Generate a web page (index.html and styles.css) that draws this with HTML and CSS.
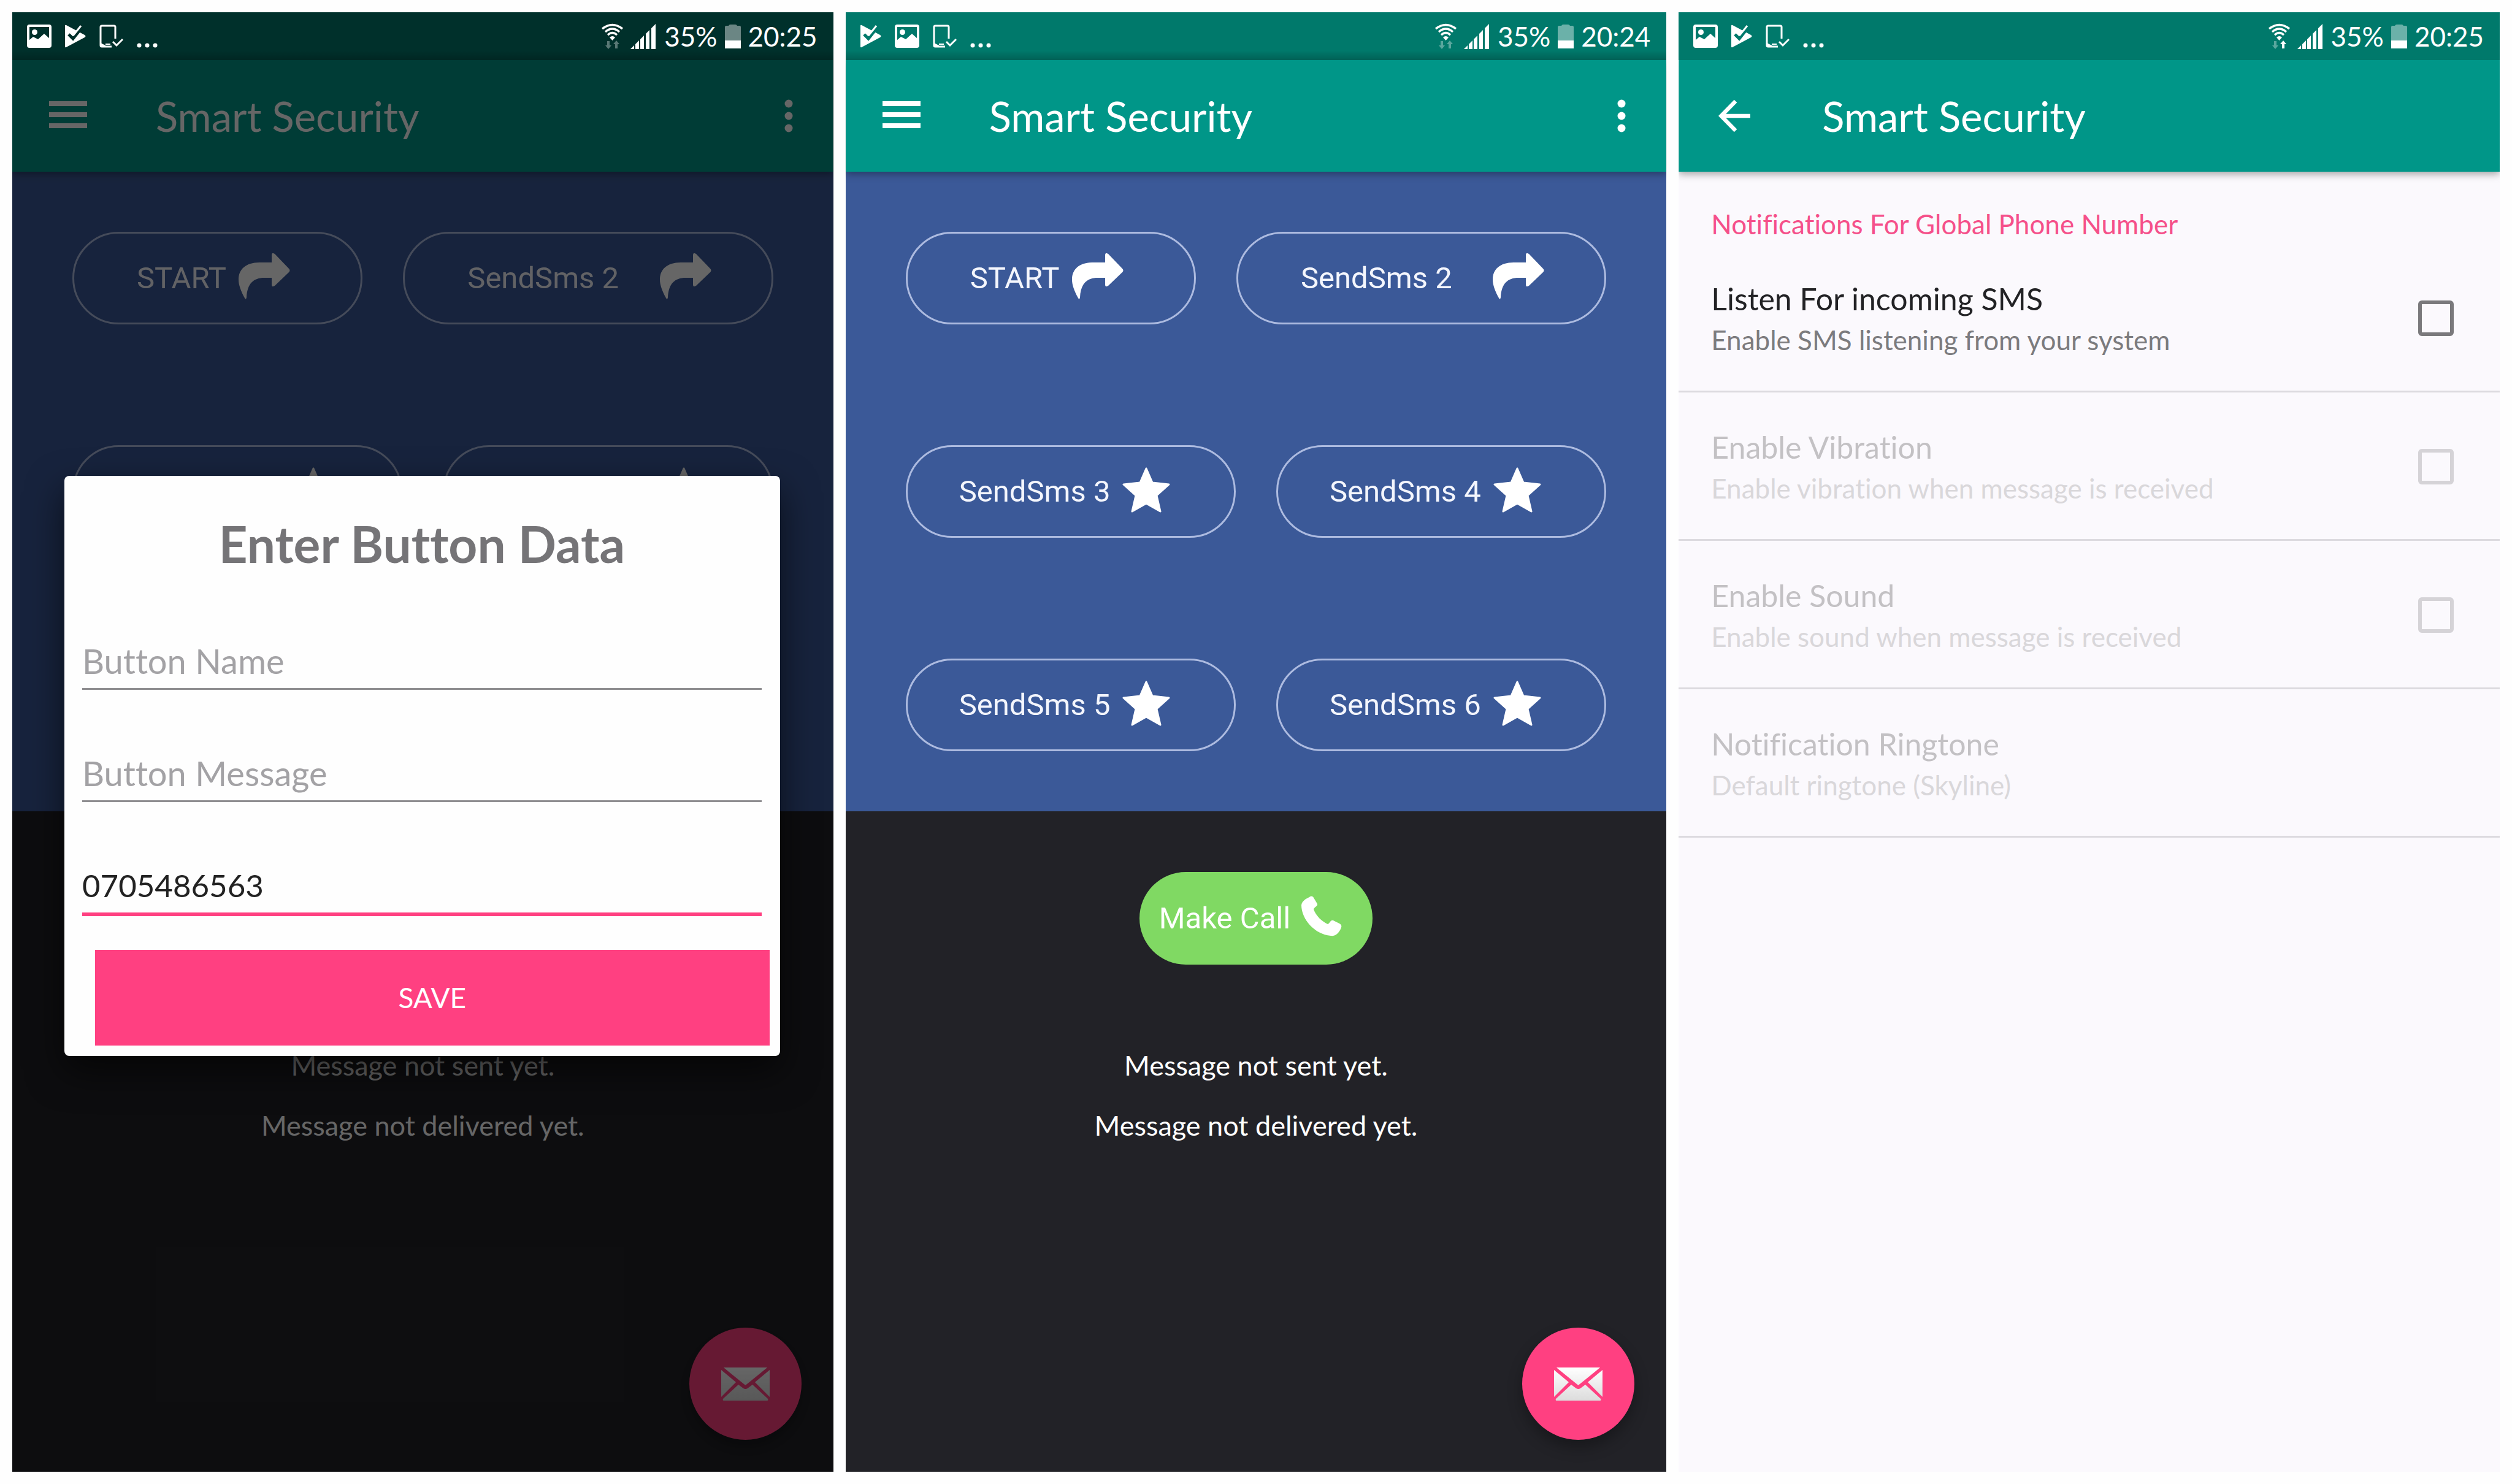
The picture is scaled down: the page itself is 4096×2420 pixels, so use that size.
FILE: index.html
```html
<!DOCTYPE html>
<html lang="en">
<head>
<meta charset="utf-8">
<title>Smart Security</title>
<meta name="viewport" content="width=device-width, initial-scale=1">
<link rel="stylesheet" href="styles.css">
</head>
<body>
<svg class="sprite" aria-hidden="true">
  <defs>
    <linearGradient id="paper" x1="0" y1="0" x2="0" y2="1">
      <stop offset="0" stop-color="#ffffff"/>
      <stop offset="1" stop-color="#dcdcdc"/>
    </linearGradient>
    <symbol id="i-image" viewBox="0 0 40 38">
      <rect x="2" y="2" width="36" height="34" rx="2" fill="none" stroke="currentColor" stroke-width="4"/>
      <circle cx="12.500" cy="12.500" r="4.500" fill="currentColor"/>
      <path fill="currentColor" d="M3 26 10 20 18 24 28 15 37 23V36H3Z"/>
    </symbol>
    <symbol id="i-play" viewBox="0 0 34 38">
      <path fill="currentColor" d="M0 2Q0 0 2 1L32 17Q35 19 32 21L2 37Q0 38 0 36Z"/>
      <path class="knockout" d="M6 16 13 23 29 3" fill="none" stroke-width="5"/>
      <path d="M9 13 14 17 26 2" fill="none" stroke="currentColor" stroke-width="3"/>
    </symbol>
    <symbol id="i-device" viewBox="0 0 39 38">
      <path fill="none" stroke="currentColor" stroke-width="3" d="M26 23V4Q26 2 24 2H4Q2 2 2 4V34Q2 36 4 36H20"/>
      <path fill="currentColor" d="M2 30 10 34V37H3Z"/>
      <path fill="none" stroke="currentColor" stroke-width="2" d="M10 32H18"/>
      <path fill="none" stroke="currentColor" stroke-width="3" d="M22 28 28 34 38 24"/>
    </symbol>
    <symbol id="i-more" viewBox="0 0 34 38">
      <circle cx="4" cy="34" r="3.500" fill="currentColor"/><circle cx="17" cy="34" r="3.500" fill="currentColor"/><circle cx="30" cy="34" r="3.500" fill="currentColor"/>
    </symbol>
    <symbol id="i-wifi" viewBox="0 0 35 42">
      <g fill="none" stroke="currentColor" stroke-width="3.500">
        <path d="M1 9Q17.500-4 34 9"/><path d="M6 14Q17.500 4 29 14"/><path d="M10 19Q17.500 12 25 19"/>
      </g>
      <path fill="currentColor" d="M17.500 28 13 23Q17.500 19 22 23Z"/>
      <path class="wifi-down" fill="currentColor" d="M9 29H13V36H16L11 42 6 36H9Z"/>
      <path class="wifi-up" fill="currentColor" d="M22 41H26V34H29L24 28 19 34H22Z"/>
    </symbol>
    <symbol id="i-signal" viewBox="0 0 41 41">
      <path fill="currentColor" d="M0 41 6 35V41ZM8 33 14 27V41H8ZM16 25 22 19V41H16ZM25 16 31 10V41H25ZM34 7 41 0V41H34Z"/>
    </symbol>
    <symbol id="i-battery" viewBox="0 0 26 39">
      <path fill="currentColor" opacity=".42" d="M0 4Q0 2 2 2H6Q7 0 9 0H17Q19 0 20 2H24Q26 2 26 4V26H0Z"/>
      <path fill="currentColor" d="M0 26H26V39H0Z"/>
    </symbol>
    <symbol id="i-menu" viewBox="0 0 62 44">
      <path fill="currentColor" d="M0 0H62V8H0ZM0 18H62V26H0ZM0 36H62V44H0Z"/>
    </symbol>
    <symbol id="i-dots" viewBox="0 0 14 54">
      <circle cx="7" cy="7" r="6.500" fill="currentColor"/><circle cx="7" cy="27" r="6.500" fill="currentColor"/><circle cx="7" cy="47" r="6.500" fill="currentColor"/>
    </symbol>
    <symbol id="i-back" viewBox="0 0 52 52">
      <path fill="none" stroke="currentColor" stroke-width="6.500" d="M28 2 4.500 26 28 50M5 26H52"/>
    </symbol>
    <symbol id="i-forward" viewBox="0 0 84 75">
      <path fill="currentColor" d="M54 3Q54-2 59 1L82 25Q85 28 82 31L59 53Q54 56 54 51V40H42C24 40 14 50 13 72Q12 77 10 73C4 62 0 52 0 43C0 26 12 15 34 15H54Z"/>
    </symbol>
    <symbol id="i-star" viewBox="0 0 78 74">
      <path fill="currentColor" stroke="currentColor" stroke-width="3" stroke-linejoin="round" d="M39 2 49 25 76 28 56 46 62 72 39 59 16 72 22 46 2 28 29 25Z"/>
    </symbol>
    <symbol id="i-phone" viewBox="0 0 66 66">
      <path fill="currentColor" d="M13 2C16 0 18 0 20 3L26 13C27 17 21 18 20 22C24 33 34 42 43 46C46 45 48 38 52 40L62 45C66 47 66 50 64 54C60 62 55 66 48 65C22 63 0 38 0 15C1 9 6 5 13 2Z"/>
    </symbol>
    <symbol id="i-mail" viewBox="0 0 79 54">
      <path fill="url(#paper)" d="M4 0H75Q73 2 39.500 29Q6 2 4 0ZM0 4 24 24 0 48ZM79 4 55 24 79 48ZM4 54Q2 54 3 51L28 28 36 34Q39.500 36 43 34L51 28 76 51Q77 54 75 54Z"/>
    </symbol>
  </defs>
</svg>

<main class="gallery">

  <section class="phone phone--dimmed">
    <div class="status">
      <svg class="status__image"><use href="#i-image"/></svg>
      <svg class="status__play"><use href="#i-play"/></svg>
      <svg class="status__device"><use href="#i-device"/></svg>
      <svg class="status__more"><use href="#i-more"/></svg>
      <svg class="status__wifi"><use href="#i-wifi"/></svg>
      <svg class="status__signal"><use href="#i-signal"/></svg>
      <span class="status__level">35%</span>
      <svg class="status__battery"><use href="#i-battery"/></svg>
      <span class="status__time">20:25</span>
    </div>
    <div class="screen">
      <header class="appbar">
        <button class="icon-button" aria-label="Menu"><svg class="icon-menu"><use href="#i-menu"/></svg></button>
        <h1 class="appbar__title">Smart Security</h1>
        <button class="icon-button" aria-label="More options"><svg class="icon-dots"><use href="#i-dots"/></svg></button>
      </header>
      <div class="actions">
        <div class="actions__row actions__row--first">
          <button class="pill pill--arrow">START<svg class="icon-forward"><use href="#i-forward"/></svg></button>
          <button class="pill pill--arrow pill--spread">SendSms 2<svg class="icon-forward"><use href="#i-forward"/></svg></button>
        </div>
        <div class="actions__row">
          <button class="pill">SendSms 3<svg class="icon-star"><use href="#i-star"/></svg></button>
          <button class="pill">SendSms 4<svg class="icon-star"><use href="#i-star"/></svg></button>
        </div>
        <div class="actions__row">
          <button class="pill">SendSms 5<svg class="icon-star"><use href="#i-star"/></svg></button>
          <button class="pill">SendSms 6<svg class="icon-star"><use href="#i-star"/></svg></button>
        </div>
      </div>
      <div class="calls">
        <button class="call">Make Call<svg class="icon-phone"><use href="#i-phone"/></svg></button>
        <p class="report">Message not sent yet.</p>
        <p class="report">Message not delivered yet.</p>
      </div>
      <button class="fab" aria-label="Compose message"><svg class="icon-mail"><use href="#i-mail"/></svg></button>
      <div class="scrim">
        <form class="dialog">
          <h2 class="dialog__title">Enter Button Data</h2>
          <input class="field" type="text" placeholder="Button Name" aria-label="Button Name">
          <input class="field" type="text" placeholder="Button Message" aria-label="Button Message">
          <input class="field field--active" type="tel" value="0705486563" aria-label="Phone number">
          <button class="save" type="button">SAVE</button>
        </form>
      </div>
    </div>
  </section>

  <section class="phone">
    <div class="status status--shaded">
      <svg class="status__play"><use href="#i-play"/></svg>
      <svg class="status__image"><use href="#i-image"/></svg>
      <svg class="status__device"><use href="#i-device"/></svg>
      <svg class="status__more"><use href="#i-more"/></svg>
      <svg class="status__wifi"><use href="#i-wifi"/></svg>
      <svg class="status__signal"><use href="#i-signal"/></svg>
      <span class="status__level">35%</span>
      <svg class="status__battery"><use href="#i-battery"/></svg>
      <span class="status__time">20:24</span>
    </div>
    <div class="screen">
      <header class="appbar">
        <button class="icon-button" aria-label="Menu"><svg class="icon-menu"><use href="#i-menu"/></svg></button>
        <h1 class="appbar__title">Smart Security</h1>
        <button class="icon-button" aria-label="More options"><svg class="icon-dots"><use href="#i-dots"/></svg></button>
      </header>
      <div class="actions">
        <div class="actions__row actions__row--first">
          <button class="pill pill--arrow">START<svg class="icon-forward"><use href="#i-forward"/></svg></button>
          <button class="pill pill--arrow pill--spread">SendSms 2<svg class="icon-forward"><use href="#i-forward"/></svg></button>
        </div>
        <div class="actions__row">
          <button class="pill">SendSms 3<svg class="icon-star"><use href="#i-star"/></svg></button>
          <button class="pill">SendSms 4<svg class="icon-star"><use href="#i-star"/></svg></button>
        </div>
        <div class="actions__row">
          <button class="pill">SendSms 5<svg class="icon-star"><use href="#i-star"/></svg></button>
          <button class="pill">SendSms 6<svg class="icon-star"><use href="#i-star"/></svg></button>
        </div>
      </div>
      <div class="calls">
        <button class="call">Make Call<svg class="icon-phone"><use href="#i-phone"/></svg></button>
        <p class="report">Message not sent yet.</p>
        <p class="report">Message not delivered yet.</p>
      </div>
      <button class="fab" aria-label="Compose message"><svg class="icon-mail"><use href="#i-mail"/></svg></button>
    </div>
  </section>

  <section class="phone phone--uploading">
    <div class="status">
      <svg class="status__image"><use href="#i-image"/></svg>
      <svg class="status__play"><use href="#i-play"/></svg>
      <svg class="status__device"><use href="#i-device"/></svg>
      <svg class="status__more"><use href="#i-more"/></svg>
      <svg class="status__wifi"><use href="#i-wifi"/></svg>
      <svg class="status__signal"><use href="#i-signal"/></svg>
      <span class="status__level">35%</span>
      <svg class="status__battery"><use href="#i-battery"/></svg>
      <span class="status__time">20:25</span>
    </div>
    <div class="screen screen--light">
      <header class="appbar">
        <button class="icon-button icon-button--back" aria-label="Back"><svg class="icon-back"><use href="#i-back"/></svg></button>
        <h1 class="appbar__title">Smart Security</h1>
      </header>
      <div class="settings">
        <h2 class="settings__category">Notifications For Global Phone Number</h2>
        <label class="setting">
          <span class="setting__text">
            <span class="setting__title">Listen For incoming SMS</span>
            <span class="setting__summary">Enable SMS listening from your system</span>
          </span>
          <input class="setting__box" type="checkbox">
        </label>
        <label class="setting setting--off">
          <span class="setting__text">
            <span class="setting__title">Enable Vibration</span>
            <span class="setting__summary">Enable vibration when message is received</span>
          </span>
          <input class="setting__box" type="checkbox" disabled>
        </label>
        <label class="setting setting--off">
          <span class="setting__text">
            <span class="setting__title">Enable Sound</span>
            <span class="setting__summary">Enable sound when message is received</span>
          </span>
          <input class="setting__box" type="checkbox" disabled>
        </label>
        <div class="setting setting--off">
          <span class="setting__text">
            <span class="setting__title">Notification Ringtone</span>
            <span class="setting__summary">Default ringtone (Skyline)</span>
          </span>
        </div>
      </div>
    </div>
  </section>

</main>
</body>
</html>
```
FILE: styles.css
```css
:root {
  --teal: #009688;
  --teal-dark: #00796b;
  --pink: #ff4081;
  --blue: #3b5998;
  --night: #222227;
}

* { box-sizing: border-box; }

body {
  margin: 0;
  background: #fefefe;
  font-family: Lato, "Noto Sans", sans-serif;
  font-variant-ligatures: no-common-ligatures;
}

h1, h2, p { margin: 0; font-weight: 400; }

button {
  margin: 0;
  padding: 0;
  border: 0;
  background: none;
  color: inherit;
  font: inherit;
  cursor: pointer;
}

svg { display: block; flex: none; }
.sprite { position: absolute; width: 0; height: 0; }

.gallery {
  display: grid;
  grid-template-columns: repeat(3, 1fr);
  gap: 20px;
  min-height: 100vh;
  padding: 20px;
}

.phone {
  --bar: var(--teal-dark);
  --wifi-up: .35;
  display: flex;
  flex-direction: column;
  color: #fff;
}
.phone--dimmed { --bar: #00302b; }
.phone--uploading { --wifi-up: 1; }

/* Status bar */
.status {
  display: flex;
  align-items: center;
  height: 78px;
  padding: 0 26px 0 24px;
  background: var(--bar);
  font-size: 44px;
  line-height: 54px;
}
.phone--dimmed .status,
.status--shaded { background: linear-gradient(transparent 80%, rgba(0, 0, 0, .2)) var(--bar); }
.knockout { stroke: var(--bar); }
.status__image { width: 40px; height: 38px; margin-right: 22px; }
.status__play { width: 34px; height: 38px; margin-right: 22px; }
.status__device { width: 39px; height: 38px; margin-right: 22px; }
.status__more { width: 34px; height: 38px; margin-right: auto; }
.status__wifi { width: 35px; height: 42px; margin-right: 12px; }
.status__signal { width: 41px; height: 41px; margin-right: 14px; }
.status__battery { width: 26px; height: 39px; margin: 0 12px; }
.wifi-down { opacity: .35; }
.wifi-up { opacity: var(--wifi-up); }

/* Screen */
.screen {
  position: relative;
  flex: 1;
  display: flex;
  flex-direction: column;
  background: var(--night);
}
.screen--light { background: #fbf9fd; }

.appbar {
  z-index: 1;
  display: flex;
  align-items: center;
  height: 182px;
  padding: 0 66px 0 60px;
  background: var(--teal);
  box-shadow: 0 4px 12px rgba(0, 0, 0, .35);
  clip-path: inset(0 0 -20px);
}
.appbar__title {
  flex: 1;
  font-size: 67px;
  line-height: 80px;
}
.icon-button { display: flex; }
.icon-button:first-child { width: 174px; }
.icon-button--back { padding-left: 5px; }
.icon-menu { width: 62px; height: 44px; margin-bottom: 4px; }
.icon-dots { width: 14px; height: 54px; }
.icon-back { width: 52px; height: 52px; }

.actions {
  display: grid;
  gap: 197px;
  padding: 98px;
  background: var(--blue);
}
.actions__row {
  display: grid;
  grid-template-columns: 1fr 1fr;
  gap: 66px;
}
.actions__row--first { grid-template-columns: 473fr 603fr; }

.pill {
  display: flex;
  align-items: center;
  gap: 20px;
  height: 151px;
  padding: 0 84px;
  border: 3px solid rgba(222, 230, 255, .7);
  border-radius: 76px;
  font-family: Roboto, "Noto Sans", sans-serif;
  font-size: 49px;
  line-height: 60px;
  color: #f4f6fd;
}
.pill--arrow { padding: 0 98px 0 102px; }
.pill--spread { justify-content: space-between; }
.pill svg { margin-bottom: 6px; color: #fff; }
.icon-forward { width: 84px; height: 75px; }
.icon-star { width: 78px; height: 74px; }

.calls {
  display: flex;
  flex-direction: column;
  align-items: center;
  padding-top: 99px;
}
.call {
  display: flex;
  align-items: center;
  gap: 18px;
  height: 151px;
  margin-bottom: 137px;
  padding: 0 50px 0 32px;
  border-radius: 76px;
  background: #80d963;
  font-family: Roboto, "Noto Sans", sans-serif;
  font-size: 49px;
  line-height: 60px;
}
.icon-phone { width: 66px; height: 66px; margin-bottom: 8px; }

.report {
  margin-bottom: 44px;
  font-size: 45px;
  line-height: 54px;
}

.fab {
  position: absolute;
  right: 52px;
  bottom: 52px;
  display: flex;
  align-items: center;
  justify-content: center;
  width: 183px;
  height: 183px;
  border-radius: 50%;
  background: var(--pink);
  box-shadow: 0 12px 24px rgba(0, 0, 0, .3);
}
.icon-mail { width: 79px; height: 54px; }

/* Dialog */
.scrim {
  position: absolute;
  inset: 0;
  z-index: 2;
  display: flex;
  align-items: center;
  padding: 0 87px 0 85px;
  background: rgba(0, 0, 0, .6);
}
.dialog {
  display: flex;
  flex: 1;
  flex-direction: column;
  padding: 61px 17px 17px 29px;
  border-radius: 8px;
  background: #fefefe;
  box-shadow: 0 24px 60px rgba(0, 0, 0, .6);
}
.dialog__title {
  margin: 0 13px 97px 0;
  font-size: 82px;
  font-weight: 700;
  line-height: 98px;
  text-align: center;
  color: #757477;
}
.field {
  height: 93px;
  margin: 0 13px 90px 0;
  padding: 0;
  border: 0;
  border-bottom: 3px solid #8e8d90;
  border-radius: 0;
  outline: 0;
  background: none;
  font: inherit;
  font-size: 56px;
  color: #222;
}
.field::placeholder { color: #a3a2a5; opacity: 1; }
.field--active {
  height: 96px;
  margin-bottom: 55px;
  border-bottom: 6px solid var(--pink);
  font-size: 51px;
}
.save {
  height: 156px;
  margin-left: 21px;
  background: var(--pink);
  font-size: 46px;
  line-height: 54px;
}

/* Settings */
.settings__category {
  padding: 58px 53px 6px;
  font-size: 44px;
  line-height: 54px;
  color: #f5508a;
}
.setting {
  display: flex;
  align-items: center;
  justify-content: space-between;
  padding: 59px 75px 56px 53px;
  border-bottom: 3px solid #dcdadf;
  color: #222225;
}
.setting__text { display: grid; gap: 10px; }
.setting__title { font-size: 50px; line-height: 60px; }
.setting__summary { font-size: 44px; line-height: 54px; color: #7c7b7e; }
.setting__box {
  appearance: none;
  flex: none;
  width: 58px;
  height: 58px;
  margin: 0;
  border: 6px solid #7a797c;
  border-radius: 6px;
}
.setting--off { color: #c3c1c4; }
.setting--off .setting__summary { color: #d9d7da; }
.setting--off .setting__box { border-color: #d5d3d7; }
```
